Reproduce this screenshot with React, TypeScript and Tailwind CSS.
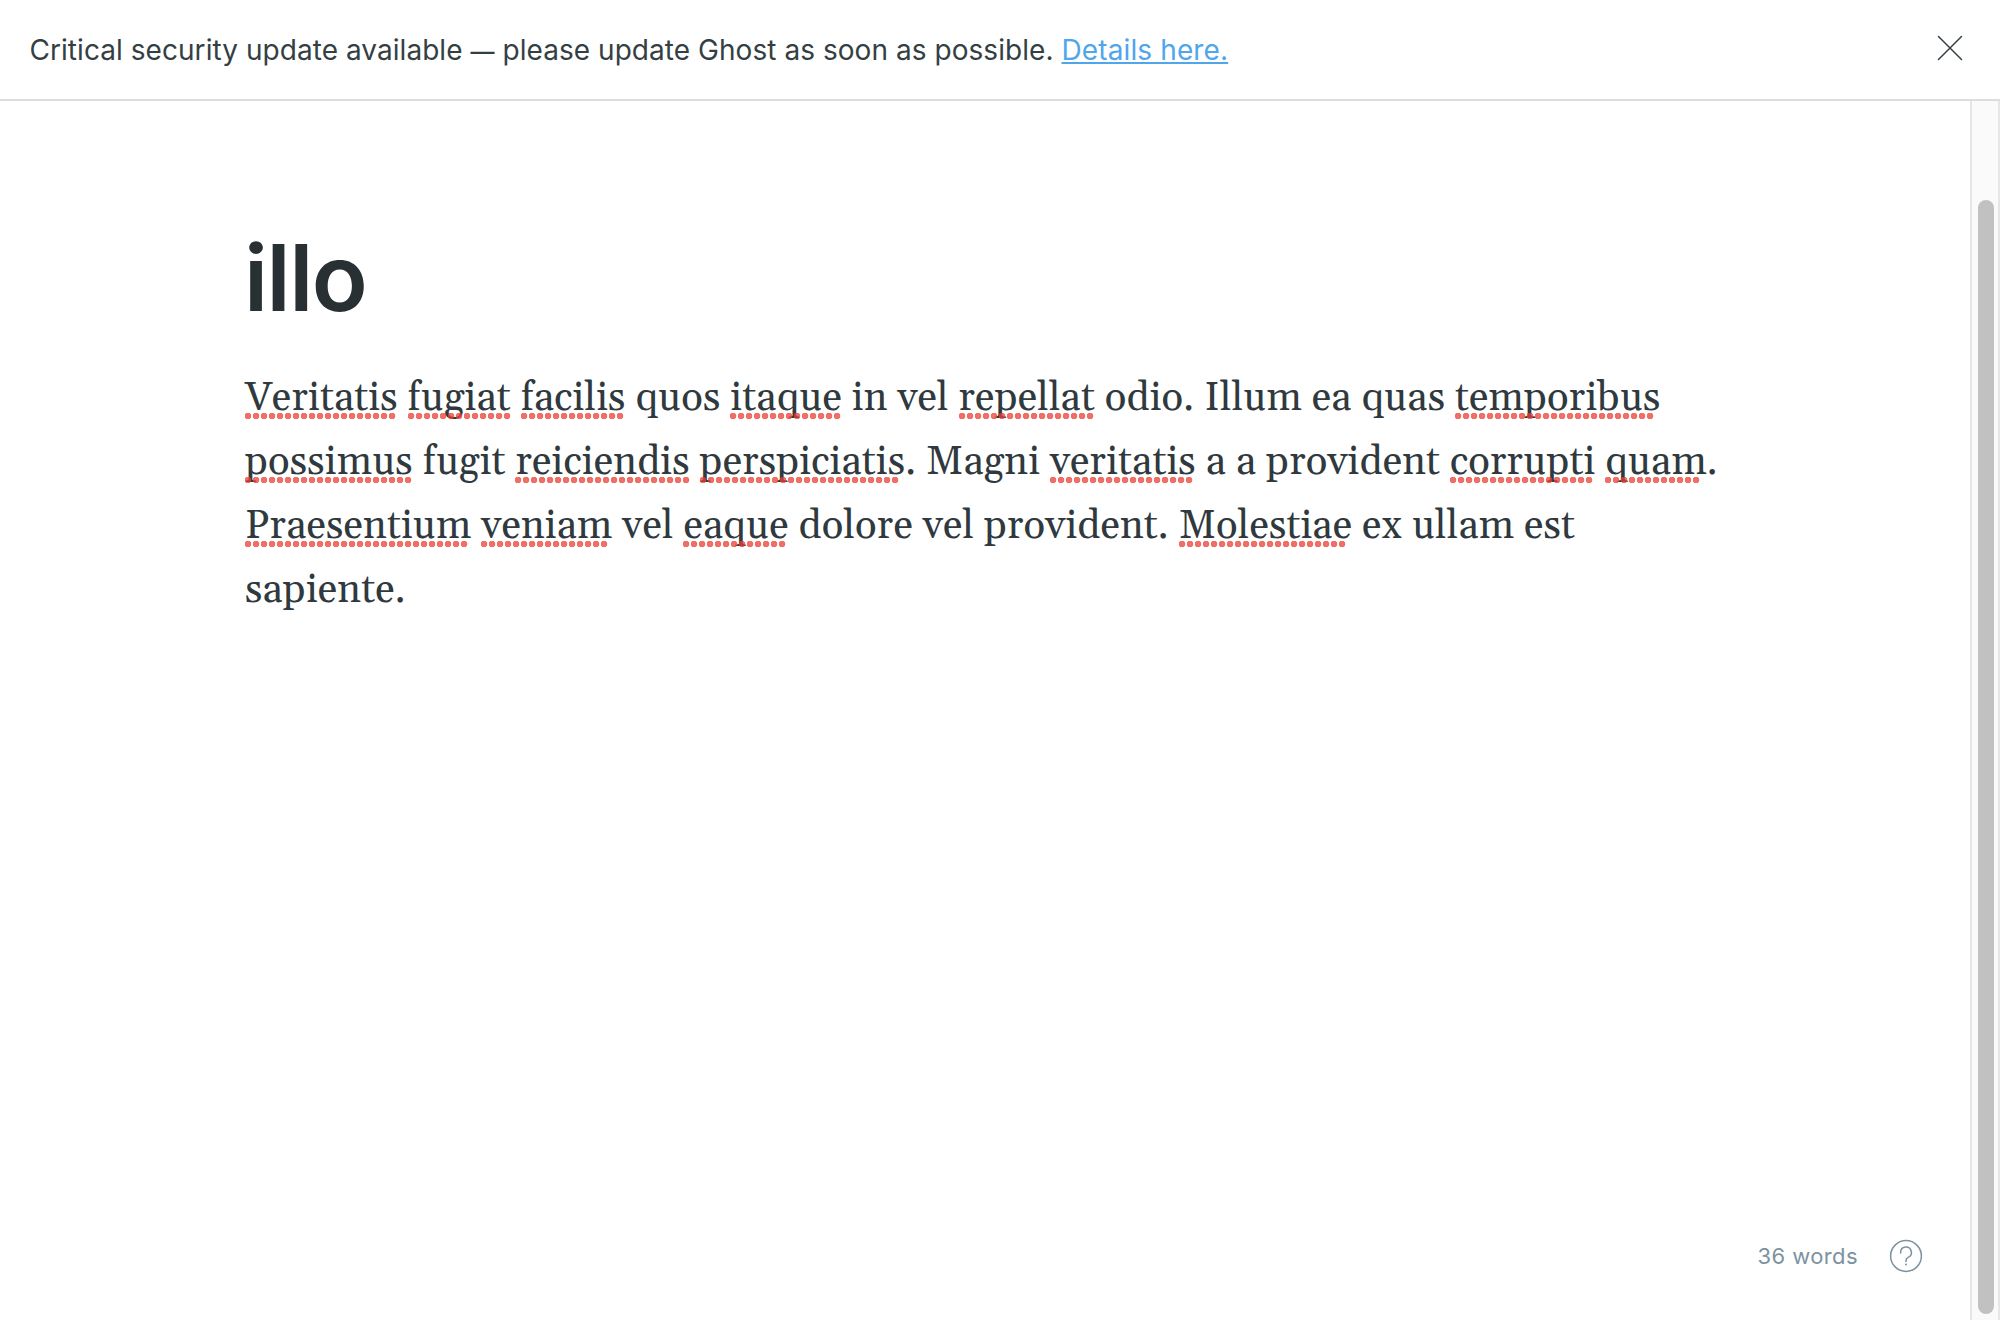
import type { ReactNode } from 'react';

// Misspelled word with a row of whole red dots, 8px apart, under it.
function Typo({ children }: { children: ReactNode }) {
  return (
    <span className="relative inline-block">
      {children}
      <span className="absolute left-0 top-[46px] h-1.5 w-[round(down,calc(100%+2px),8px)] bg-[radial-gradient(circle_at_3px_3px,#ea3f33_2.9px,transparent_3.7px)] bg-[length:8px_6px] bg-repeat-x opacity-75" />
    </span>
  );
}

function Banner() {
  return (
    <header className="flex h-[101px] shrink-0 items-center justify-between border-b-2 border-[#dcdede] pl-[29.5px] pr-[37px]">
      <p className="text-[28px] leading-[40px] tracking-[0.05px] text-[#343f44]">
        Critical security update available <span className="text-[24px] font-medium leading-none">—</span> please update Ghost as soon as possible.{' '}
        <a href="#details" className="tracking-[0.12px] text-[#50a6eb] underline decoration-2 underline-offset-2 [text-decoration-skip-ink:none]">
          Details here.
        </a>
      </p>
      <button aria-label="Close" className="relative -top-[1.5px]">
        <svg width="26" height="26" viewBox="0 0 26 26" fill="none" stroke="#343f44" strokeWidth="1.5" strokeLinecap="round">
          <path d="M1.5 1.5 24.5 24.5M24.5 1.5 1.5 24.5" />
        </svg>
      </button>
    </header>
  );
}

function Footer() {
  return (
    <footer className="flex items-center justify-end gap-[31px] pb-[47px] pr-[47px] text-[#7d92a0]">
      <span className="text-[22px] leading-[34px] tracking-[0.4px]">36 words</span>
      <svg width="34" height="34" viewBox="0 0 34 34" fill="none" stroke="currentColor" strokeWidth="1.5" strokeLinecap="round">
        <circle cx="17" cy="17" r="15.4" />
        <path d="M11.6 14V13.4a5.4 5.4 0 1 1 7.6 5C17.8 19.1 17 20.2 17 21.6V22.4" />
        <circle cx="17" cy="25.6" r="1" fill="currentColor" stroke="none" />
      </svg>
    </footer>
  );
}

export default function App() {
  return (
    <div className="flex h-[1320px] w-[2000px] flex-col overflow-hidden bg-white font-['Inter',sans-serif]">
      <Banner />
      <div className="flex min-h-0 flex-1">
        <main className="flex min-w-0 flex-1 flex-col">
          <article className="flex-1 pl-[245px] pt-[121px]">
            <h1 className="-ml-px text-[92px] font-semibold leading-[112px] tracking-[-1.5px] text-[#283034]">illo</h1>
            <div className="pt-[33px] font-['Gelasio','Liberation_Serif',serif] text-[40px] leading-[64px] tracking-[0.2px] whitespace-nowrap text-[#2f393e]">
              <p>
                <Typo>Veritatis</Typo> <Typo>fugiat</Typo> <Typo>facilis</Typo> quos <Typo>itaque</Typo> in vel{' '}
                <Typo>repellat</Typo> odio. Illum ea quas <Typo>temporibus</Typo>
                <br />
                <Typo>possimus</Typo> fugit <Typo>reiciendis</Typo> <Typo>perspiciatis</Typo>. Magni{' '}
                <Typo>veritatis</Typo> a a provident <Typo>corrupti</Typo> <Typo>quam</Typo>.
                <br />
                <Typo>Praesentium</Typo> <Typo>veniam</Typo> vel <Typo>eaque</Typo> dolore vel provident.{' '}
                <Typo>Molestiae</Typo> ex ullam est
                <br />
                sapiente.
              </p>
            </div>
          </article>
          <Footer />
        </main>
        <aside className="w-[30px] border-x-2 border-[#e6e6e6] bg-[#fafafa] px-1.5 pb-1.5 pt-[99px]">
          <div className="h-full w-4 rounded-full bg-[#c1c1c1]" />
        </aside>
      </div>
    </div>
  );
}
